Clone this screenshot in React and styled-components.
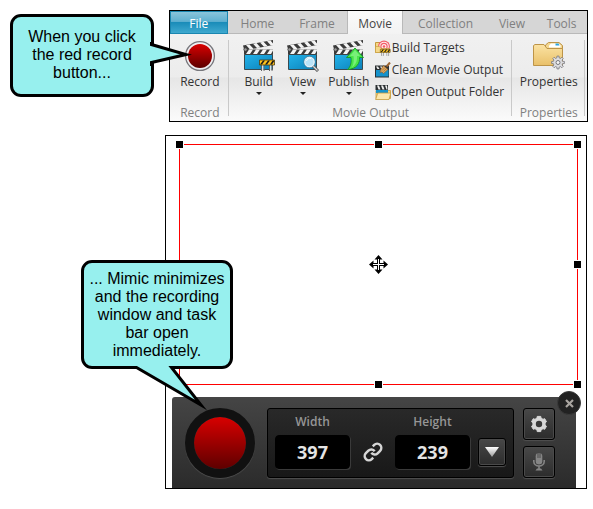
import React, { useId, useState } from "react";
import styled, { createGlobalStyle, css } from "styled-components";
import { Link as ChainLink } from "lucide-react";

const GlobalStyle = createGlobalStyle`
  *, *::before, *::after { box-sizing: border-box; }
  body { margin: 0; background: #fff; }
  button, input { font: inherit; color: inherit; margin: 0; padding: 0; }
`;

const uiFont = `"Open Sans", "Noto Sans", sans-serif`;

/* ---------- page ---------- */

const Page = styled.main`
  position: relative;
  display: flex;
  flex-direction: column;
  gap: 13px;
  padding: 10px 5px 20px 165px;
  font-family: ${uiFont};
  font-size: 12px;
  line-height: 16px;
`;

/* ---------- ribbon ---------- */

const Ribbon = styled.section`
  margin-left: 4px;
  border: 1px solid #000;
  background: linear-gradient(#f3f3f3 0, #ececec 60%, #e6e6e6 61%, #fbfbfb 100%);
`;

const TabStrip = styled.nav`
  display: flex;
  align-items: stretch;
  height: 23px;
  background: #d6d6d6;
  border-bottom: 1px solid #b9b9b9;
`;

const Tab = styled.button`
  flex: ${(p) => p.$grow || 1} 1 0;
  height: 23px;
  border: 0;
  padding-top: 3px;
  background: none;
  color: #808080;
  white-space: nowrap;
  cursor: pointer;

  ${(p) =>
    p.$kind === "file" &&
    css`
      color: #fff;
      border: 1px solid #1a86b0;
      background: linear-gradient(#8ac4db 0, #5fb0d0 45%, #1a8cb9 50%, #3fa9cf 100%);
    `}
  ${(p) =>
    p.$kind === "current" &&
    css`
      color: #444;
      border: 1px solid #b9b9b9;
      border-width: 0 1px;
      background: linear-gradient(#fafafa, #f3f3f3);
    `}
`;

const RibbonBody = styled.div`
  display: flex;
  padding: 6px 2px 5px 0;
`;

const Group = styled.section`
  flex: ${(p) => p.$grow} 1 0;
  display: flex;
  flex-direction: column;
  justify-content: space-between;
  height: 76px;
  padding-left: 2px;
  border-right: 1px solid #c9c9c9;
`;

const GroupTools = styled.div`
  display: flex;
  justify-content: ${(p) => (p.$start ? "flex-start" : "center")};
  padding-left: ${(p) => (p.$start ? "6px" : "0")};
`;

const GroupName = styled.div`
  margin-bottom: -5px;
  text-align: center;
  color: #808080;
  white-space: nowrap;
`;

const LargeTool = styled.button`
  display: flex;
  flex-direction: column;
  align-items: center;
  gap: 2px;
  width: ${(p) => p.$width || "auto"};
  height: 56px;
  border: 0;
  background: none;
  color: #333;
  white-space: nowrap;
  cursor: pointer;

  svg { display: block; flex: none; }
`;

const Caret = styled.span`
  width: 0;
  border: 3px solid transparent;
  border-top-color: #222;
  border-bottom: 0;
`;

const SmallTools = styled.div`
  display: flex;
  flex-direction: column;
  margin: -3px 0 0 2px;
`;

const SmallTool = styled.button`
  display: flex;
  align-items: center;
  gap: 1px;
  height: 22px;
  border: 0;
  background: none;
  color: #333;
  white-space: nowrap;
  cursor: pointer;
`;

/* ---------- recording window ---------- */

const RecordingWindow = styled.section`
  margin-right: 1px;
  padding: 8px 10px 0 6px;
  border: 1px solid #000;
`;

const CaptureArea = styled.div`
  position: relative;
  display: flex;
  align-items: center;
  justify-content: center;
  height: 241px;
  margin: 0 -2px 12px 7px;
  border: 1px solid #f00;
`;

const HandleLayer = styled.div`
  position: absolute;
  inset: -5px;
  display: grid;
  grid-template: repeat(3, 9px) / repeat(3, 9px);
  place-content: space-between;
`;

const Handle = styled.span`
  grid-column: ${(p) => p.$column};
  grid-row: ${(p) => p.$row};
  border: 1px solid #fff;
  background: #000;
`;

const TaskBar = styled.div`
  position: relative;
  display: flex;
  align-items: flex-start;
  padding: 11px 21px 10px 13px;
  border-radius: 3px 3px 0 0;
  background: linear-gradient(#454545, #2b2b2b);
`;

const RecordButton = styled.button`
  width: 70px;
  height: 70px;
  margin-right: 12px;
  border: 9px solid #111;
  border-radius: 50%;
  background: linear-gradient(#d80000, #5e0000) padding-box;
  box-shadow: 0 1px 1px #505050;
  cursor: pointer;
`;

const SizePanel = styled.div`
  flex: 1;
  display: flex;
  justify-content: space-between;
  align-items: flex-end;
  height: 70px;
  margin-right: 9px;
  padding: 5px 7px 8px;
  border: 1px solid #000;
  border-radius: 3px;
  background: linear-gradient(#292929, #181818);
  box-shadow: 0 1px 1px #505050;
`;

const FieldWithMenu = styled.div`
  display: flex;
  align-items: flex-end;
  gap: 8px;
`;

const Field = styled.div`
  display: flex;
  flex-direction: column;
  align-items: center;
  gap: 5px;
  color: #969696;
  font-weight: 600;
`;

const SizeInput = styled.input`
  width: 75px;
  height: 34px;
  border: 1px solid #000;
  border-radius: 4px;
  background: #000;
  box-shadow: 1px 1px 0 #3a3a3a;
  color: #e4e4e4;
  font-size: 18px;
  font-weight: 700;
  text-align: center;
`;

const IconButton = styled.button`
  display: flex;
  align-items: center;
  justify-content: center;
  width: ${(p) => p.$size}px;
  height: ${(p) => p.$size}px;
  border: 1px solid #000;
  border-radius: 3px;
  background: linear-gradient(#484848, #2c2c2c);
  box-shadow: 0 1px 1px #505050, inset 0 0 0 1px #4a4a4a;
  cursor: pointer;
`;

const BareButton = styled(IconButton)`
  height: 34px;
  border: 0;
  background: none;
  box-shadow: none;
  color: #d6d6d6;
`;

const DropdownCell = styled.div`
  padding-bottom: 3px;
`;

const SideButtons = styled.div`
  display: flex;
  flex-direction: column;
  gap: 6px;
`;

const CloseButton = styled.button`
  position: absolute;
  top: -6px;
  right: -5px;
  display: flex;
  align-items: center;
  justify-content: center;
  width: 24px;
  height: 24px;
  border: 1px solid #3a3a3a;
  border-radius: 50%;
  background: #222;
  cursor: pointer;
`;

/* ---------- callouts ---------- */

const Callout = styled.aside`
  position: absolute;
  left: ${(p) => p.$left}px;
  top: ${(p) => p.$top}px;
  width: ${(p) => p.$width}px;
  padding: ${(p) => p.$pad};
  border: 3px solid #000;
  border-radius: 11px;
  background: #97f0ee;
  color: #000;
  font: 16px/18px "Liberation Sans", Arial, sans-serif;
  text-align: center;
`;

const Tail = styled.svg`
  position: absolute;
  left: ${(p) => p.$left};
  top: ${(p) => p.$top};
`;

/* ---------- icons ---------- */

function RecordIcon() {
  const id = useId();
  return (
    <svg width="32" height="32" viewBox="0 0 32 32" aria-hidden="true">
      <defs>
        <linearGradient id={id} x1="0" y1="0" x2="0" y2="1">
          <stop offset="0" stopColor="#d90000" />
          <stop offset="1" stopColor="#5c0000" />
        </linearGradient>
      </defs>
      <circle cx="16" cy="16" r="14.4" fill="#efeff2" stroke="#77777c" strokeWidth="1.3" />
      <circle cx="16" cy="16" r="12" fill={`url(#${id})`} />
    </svg>
  );
}

function ClapperArt() {
  const id = useId();
  return (
    <>
      <defs>
        <linearGradient id={id} x1="0" y1="0" x2="1" y2="1">
          <stop offset="0" stopColor="#23b3ea" />
          <stop offset="1" stopColor="#0b80b8" />
        </linearGradient>
      </defs>
      <path d="M1.5 14.5H29.5V29.5H1.5Z" fill={`url(#${id})`} stroke="#3a4a50" />
      <path d="M0 5.5 30 0V5L1.5 10.5Z" fill="#3a3a3a" />
      <path d="M3 5.1 6.5 4.5 10.5 8.7 7 9.4ZM10 3.8 13.5 3.1 17.5 7.4 14 8.1ZM17 2.5 20.5 1.8 24.5 6.1 21 6.8ZM24 1.2 27.5 .5 30 3.5V5L28 5.4Z" fill="#f4f4f4" />
      <path d="M1 9.5H30V14.5H1Z" fill="#3a3a3a" />
      <path d="M6 9.5H10L7 14H3ZM13 9.5H17L14 14H10ZM20 9.5H24L21 14H17ZM27 9.5H30V10.5L28 14H24Z" fill="#f4f4f4" />
      <circle cx="2.5" cy="9.5" r="1.7" fill="#999" stroke="#333" strokeWidth=".7" />
    </>
  );
}

function BarrierArt() {
  return (
    <>
      <path d="M2.5 5V11.5M5 5V11.5M10.5 5V11.5M13 5V11.5" stroke="#666" />
      <path d="M3.7 5V11M11.7 5V11" stroke="#eee" strokeWidth="1.2" />
      <path d="M.5 .5H15.5V5.5H.5Z" fill="#ffc21c" stroke="#4a3a10" strokeWidth=".8" />
      <path d="M4 1H6L3 5H1ZM9 1H11L8 5H6ZM13.5 1H15V2L13 5H11Z" fill="#1b1b1b" />
    </>
  );
}

function BuildIcon() {
  return (
    <svg width="32" height="32" viewBox="0 0 32 32" aria-hidden="true">
      <ClapperArt />
      <g transform="translate(16 19.5)"><BarrierArt /></g>
    </svg>
  );
}

function ViewIcon() {
  return (
    <svg width="32" height="32" viewBox="0 0 32 32" aria-hidden="true">
      <ClapperArt />
      <path d="M25.5 25.5 31 31" stroke="#555" strokeWidth="3" />
      <path d="M26 26 30.5 30.5" stroke="#ddd" strokeWidth="1.2" />
      <circle cx="22.5" cy="22" r="4.8" fill="#b9e3f8" stroke="#e8f2f8" strokeWidth="1.5" />
      <circle cx="22.5" cy="22" r="5.8" fill="none" stroke="#4f7892" strokeWidth=".6" />
      <path d="M19.5 21C20 19 22 18 24 18.5" stroke="#fff" fill="none" />
    </svg>
  );
}

function PublishIcon() {
  return (
    <svg width="32" height="32" viewBox="0 0 32 32" aria-hidden="true">
      <ClapperArt />
      <path d="M22 8 30.5 17.5H26.5C27 23 24 29 14.5 29.5 18 26.5 18.5 22 18 17.5H13.5Z" fill="#49e649" stroke="#159a24" strokeWidth=".9" />
      <path d="M22 10 27 16H24C24.5 21 22.5 25 19 27.5 21 23.5 21 19 20.5 16H17Z" fill="#9af79a" opacity=".6" />
    </svg>
  );
}

function TargetsIcon() {
  return (
    <svg width="16" height="16" viewBox="0 0 16 16" aria-hidden="true">
      <path d="M.5 2.5H5L6.5 4H12.5V12.5H.5Z" fill="#f5d889" stroke="#c59a3c" />
      <circle cx="9" cy="6.5" r="6" fill="#f25c68" />
      <circle cx="9" cy="6.5" r="4.8" fill="#fff0f0" />
      <circle cx="9" cy="6.5" r="3.7" fill="#f25c68" />
      <circle cx="9" cy="6.5" r="2.5" fill="#fff0f0" />
      <circle cx="9" cy="6.5" r="1.3" fill="#f25c68" />
      <path d="M.5 6.5H4.5L6 8.5H14.5V12.5H.5Z" fill="#f5d889" stroke="#c59a3c" strokeWidth=".6" />
      <g transform="translate(5 9) scale(.66 .6)"><BarrierArt /></g>
    </svg>
  );
}

function CleanIcon() {
  return (
    <svg width="16" height="16" viewBox="0 0 16 16" aria-hidden="true">
      <path d="M0 3.5H14V15.5H0Z" fill="#2b3032" />
      <path d="M1 8H13.5V14.5H1Z" fill="#1592cb" />
      <path d="M1 4.5H3L4.5 7H2.5ZM5 4.5H7L8.5 7H6.5Z" fill="#eee" />
      <path d="M11.5 4.5 15 .5" stroke="#9b6533" strokeWidth="2" />
      <path d="M8.5 3.5 13 7.5 8.5 11.5 7 10 5 10.5 5.5 8Z" fill="#dba45a" stroke="#8c5a2b" strokeWidth=".6" />
      <path d="M7 8.5 10 5.5M8.5 9.5 11.5 6.5" stroke="#8c5a2b" strokeWidth=".5" />
    </svg>
  );
}

function OutputIcon() {
  return (
    <svg width="16" height="16" viewBox="0 0 16 16" aria-hidden="true">
      <path d="M1 6.5H15.5V14.5H1Z" fill="#f3d27e" stroke="#c59a3c" strokeWidth=".8" />
      <path d="M.5 1H13V6H.5Z" fill="#2b3032" />
      <path d="M2 1.5H4L5.5 5.5H3.5ZM6 1.5H8L9.5 5.5H7.5ZM10 1.5H12L12.5 5.5H11.5Z" fill="#eee" />
      <path d="M1 6H13V9H1Z" fill="#1592cb" />
      <path d="M2.8 9H15.8L14 15.5H.6Z" fill="#fbe7ad" stroke="#c59a3c" strokeWidth=".8" />
    </svg>
  );
}

function gearPath(cx, cy, outer, inner, teeth, tip = 0.2) {
  const step = (Math.PI * 2) / teeth;
  const at = (r, a) => `${(cx + r * Math.cos(a)).toFixed(2)} ${(cy + r * Math.sin(a)).toFixed(2)}`;
  const root = tip + 0.1;
  let d = "";
  for (let i = 0; i < teeth; i += 1) {
    const a = i * step - Math.PI / 2;
    d += `${i ? "L" : "M"}${at(inner, a - step * root)}L${at(outer, a - step * tip)}L${at(outer, a + step * tip)}L${at(inner, a + step * root)}`;
  }
  return `${d}Z`;
}

function PropertiesIcon() {
  const id = useId();
  return (
    <svg width="32" height="32" viewBox="0 0 32 32" aria-hidden="true">
      <defs>
        <linearGradient id={id} x1="0" y1="0" x2="0" y2="1">
          <stop offset="0" stopColor="#fbe3a4" />
          <stop offset="1" stopColor="#e9c069" />
        </linearGradient>
      </defs>
      <path d="M12.5 9V5L15.5 2.5H26L29.5 5.5V9Z" fill="#f3d68e" stroke="#bd9448" />
      <path d="M16 5.5 18 3.5H25.5L27.5 5.5V7.5H16Z" fill="#fff" />
      <path d="M22.5 3.5H25.5L26.5 5.5H22.5Z" fill="#2aa5e0" />
      <path d="M.5 5.5 2 4.5H11L14 8.5H29.5V25.5H.5Z" fill={`url(#${id})`} stroke="#bd9448" />
      <path d={gearPath(25, 22.5, 6.5, 4.8, 8)} fill="#dcdcdf" stroke="#77777d" strokeWidth=".8" />
      <circle cx="25" cy="22.5" r="2" fill="#f4f4f4" stroke="#77777d" />
    </svg>
  );
}

function MoveCursor() {
  return (
    <svg width="19" height="19" viewBox="0 0 19 19" aria-hidden="true">
      <path d="M9.5 0 13.5 4.5H11V8H14.5V5.5L19 9.5 14.5 13.5V11H11V14.5H13.5L9.5 19 5.5 14.5H8V11H4.5V13.5L0 9.5 4.5 5.5V8H8V4.5H5.5Z" fill="#000" />
      <path d="M9.5 4V15M4 9.5H15" stroke="#fff" />
    </svg>
  );
}

function DownIcon() {
  const id = useId();
  return (
    <svg width="14" height="10" viewBox="0 0 14 10" aria-hidden="true">
      <defs>
        <linearGradient id={id} x1="0" y1="0" x2="0" y2="1">
          <stop offset="0" stopColor="#fff" />
          <stop offset="1" stopColor="#999" />
        </linearGradient>
      </defs>
      <path d="M0 0H14L7 10Z" fill={`url(#${id})`} />
    </svg>
  );
}

function SettingsIcon() {
  return (
    <svg width="18" height="18" viewBox="0 0 18 18" aria-hidden="true">
      <path d={gearPath(9, 9, 7.8, 6.2, 6, 0.22)} fill="#d8d8d8" stroke="#d8d8d8" strokeLinejoin="round" />
      <circle cx="9" cy="9" r="3.2" fill="#3a3a3a" />
    </svg>
  );
}

function MicIcon() {
  return (
    <svg width="14" height="18" viewBox="0 0 14 18" aria-hidden="true">
      <rect x="3.7" y="0" width="6.6" height="11.5" rx="3.3" fill="#858585" />
      <path d="M6 0V5M8 0V5" stroke="#3a3a3a" strokeWidth=".8" />
      <path d="M1.8 7V8.5A5.2 4.5 0 0 0 12.2 8.5V7M7 13V16" fill="none" stroke="#858585" strokeWidth="1.6" />
      <path d="M3.5 17.5 5 15.5H9L10.5 17.5Z" fill="#858585" />
    </svg>
  );
}

function CloseIcon() {
  return (
    <svg width="9" height="9" viewBox="0 0 9 9" aria-hidden="true">
      <path d="M1 1 8 8M8 1 1 8" stroke="#a9a5a0" strokeWidth="2.2" />
    </svg>
  );
}

/* ---------- content ---------- */

const tabs = [
  { name: "File", grow: 56, kind: "file" },
  { name: "Home", grow: 60 },
  { name: "Frame", grow: 60 },
  { name: "Movie", grow: 55, kind: "current" },
  { name: "Collection", grow: 85 },
  { name: "View", grow: 49 },
  { name: "Tools", grow: 51 },
];

const movieTools = [
  { name: "Build", width: "44px", Icon: BuildIcon },
  { name: "View", width: "44px", Icon: ViewIcon },
  { name: "Publish", width: "48px", Icon: PublishIcon },
];

const outputTools = [
  { name: "Build Targets", Icon: TargetsIcon },
  { name: "Clean Movie Output", Icon: CleanIcon },
  { name: "Open Output Folder", Icon: OutputIcon },
];

const handles = [[1, 1], [2, 1], [3, 1], [1, 2], [3, 2], [1, 3], [2, 3], [3, 3]];

function SizeField({ label, initial }) {
  const id = useId();
  const [value, setValue] = useState(initial);
  return (
    <Field>
      <label htmlFor={id}>{label}</label>
      <SizeInput id={id} value={value} onChange={(e) => setValue(e.target.value)} />
    </Field>
  );
}

export default function App() {
  return (
    <Page>
      <GlobalStyle />
      <Ribbon>
        <TabStrip>
          {tabs.map((t) => (
            <Tab key={t.name} $grow={t.grow} $kind={t.kind}>{t.name}</Tab>
          ))}
        </TabStrip>
        <RibbonBody>
          <Group $grow={57}>
            <GroupTools>
              <LargeTool><RecordIcon />Record</LargeTool>
            </GroupTools>
            <GroupName>Record</GroupName>
          </Group>
          <Group $grow={286}>
            <GroupTools $start>
              {movieTools.map(({ name, width, Icon }) => (
                <LargeTool key={name} $width={width}><Icon />{name}<Caret /></LargeTool>
              ))}
              <SmallTools>
                {outputTools.map(({ name, Icon }) => (
                  <SmallTool key={name}><Icon />{name}</SmallTool>
                ))}
              </SmallTools>
            </GroupTools>
            <GroupName>Movie Output</GroupName>
          </Group>
          <Group $grow={72}>
            <GroupTools>
              <LargeTool><PropertiesIcon />Properties</LargeTool>
            </GroupTools>
            <GroupName>Properties</GroupName>
          </Group>
        </RibbonBody>
      </Ribbon>

      <RecordingWindow>
        <CaptureArea>
          <HandleLayer>
            {handles.map(([column, row]) => (
              <Handle key={`${column}-${row}`} $column={column} $row={row} />
            ))}
          </HandleLayer>
          <MoveCursor />
        </CaptureArea>
        <TaskBar>
          <RecordButton aria-label="Record" />
          <SizePanel>
            <SizeField label="Width" initial="397" />
            <BareButton $size={20} aria-label="Link width and height">
              <ChainLink size={20} strokeWidth={3} strokeLinecap="butt" aria-hidden="true" />
            </BareButton>
            <FieldWithMenu>
              <SizeField label="Height" initial="239" />
              <DropdownCell>
                <IconButton $size={28} aria-label="Preset sizes"><DownIcon /></IconButton>
              </DropdownCell>
            </FieldWithMenu>
          </SizePanel>
          <SideButtons>
            <IconButton $size={32} aria-label="Settings"><SettingsIcon /></IconButton>
            <IconButton $size={32} aria-label="Microphone"><MicIcon /></IconButton>
          </SideButtons>
          <CloseButton aria-label="Close"><CloseIcon /></CloseButton>
        </TaskBar>
      </RecordingWindow>

      <Callout $left={10} $top={14} $width={144} $pad="11px 11px 12px">
        When you click the red record button...
        <Tail $left="137px" $top="22px" width="46" height="30" viewBox="0 0 46 30" aria-hidden="true">
          <path d="M0 4H1L3 5 38 15 3 24 1 25H0Z" fill="#97f0ee" />
          <path d="M1.5 3V5.5L36 15.5 1.5 23.5V27" fill="none" stroke="#000" strokeWidth="3" strokeMiterlimit="8" />
        </Tail>
      </Callout>
      <Callout $left={81} $top={260} $width={152} $pad="7px 3px 6px">
        ... Mimic minimizes and the recording window and task bar open immediately.
        <Tail $left="48px" $top="100px" width="78" height="52" viewBox="0 0 78 52" aria-hidden="true">
          <path d="M4 0H39V4L69 42 5 4Z" fill="#97f0ee" />
          <path d="M1 4.5H4.5L69 42 39.5 4.5H43" fill="none" stroke="#000" strokeWidth="3" strokeMiterlimit="8" />
        </Tail>
      </Callout>
    </Page>
  );
}
